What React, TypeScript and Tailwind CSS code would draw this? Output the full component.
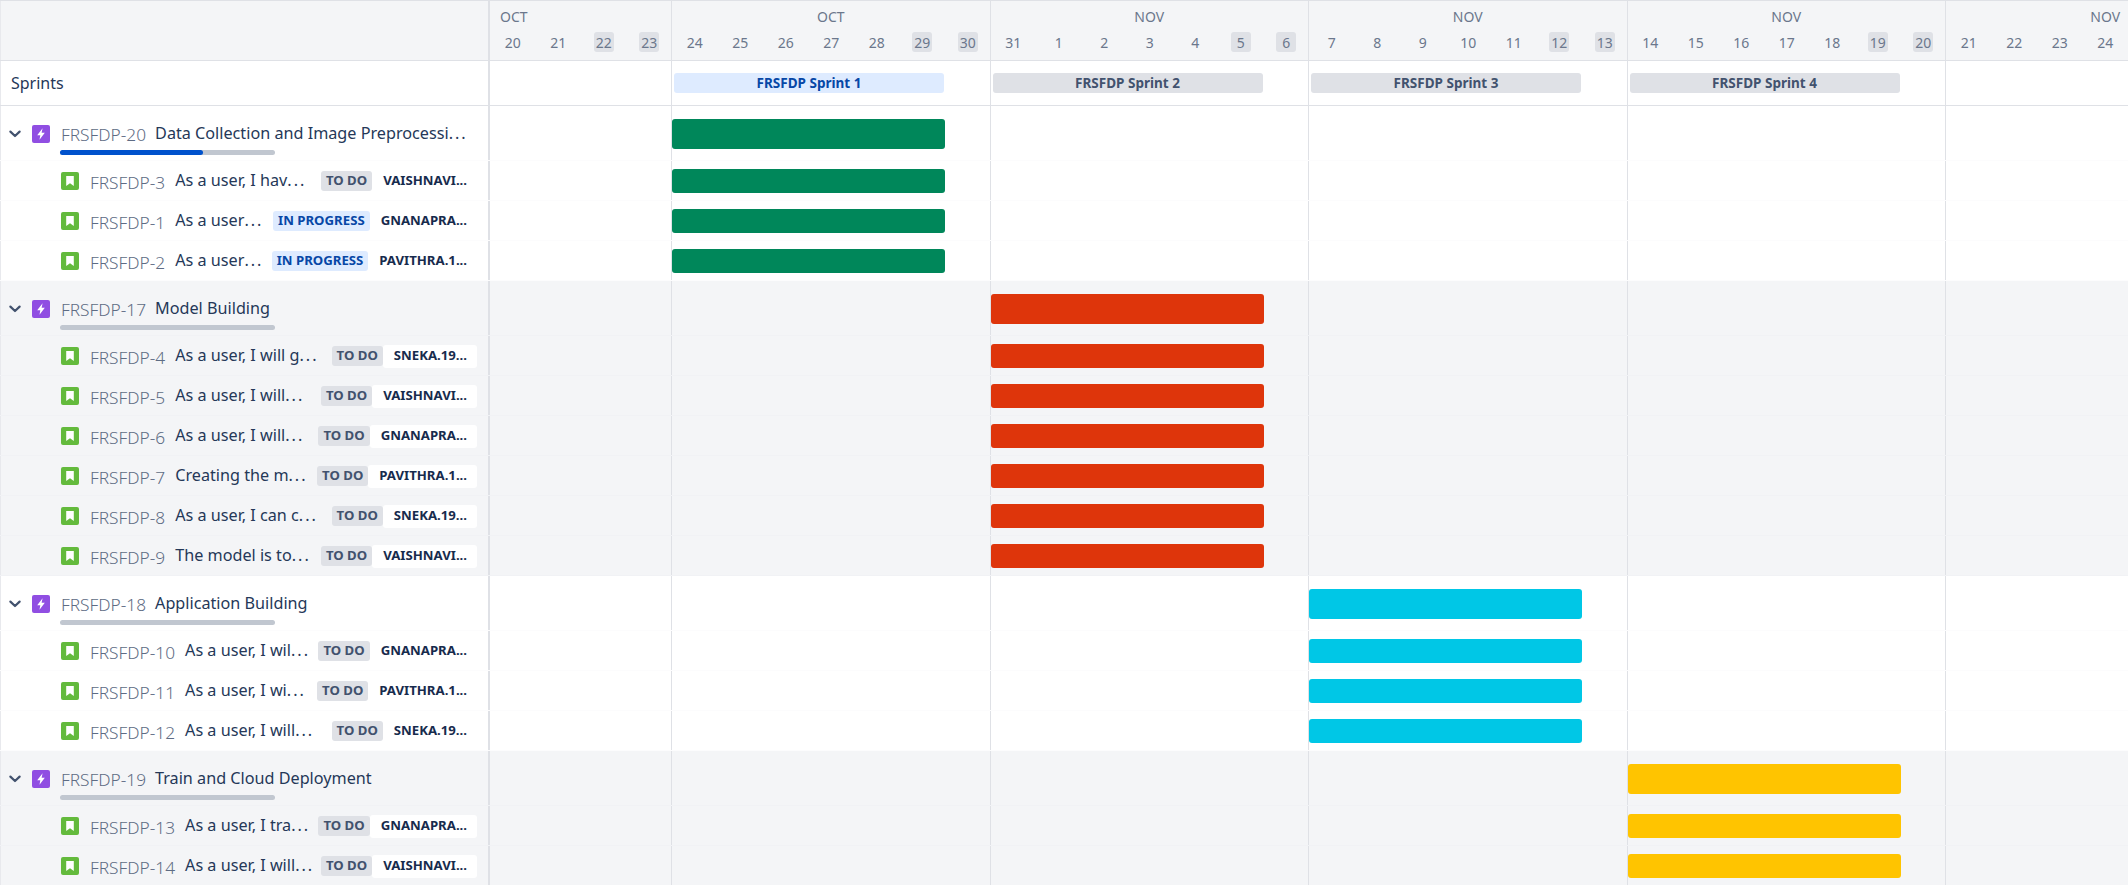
import React from "react";

type Status = "TO DO" | "IN PROGRESS";
type Story = { id: string; title: string; status: Status; who: string };
type Group = {
  id: string;
  title: string;
  week: number;
  grey: boolean;
  bar: string;
  progress?: boolean;
  stories: Story[];
};

const weekWidths = ["w-[182px]", "w-[318.5px]", "w-[318.5px]", "w-[318.5px]", "w-[318.5px]", "flex-1"];

const weeks = [
  { month: "OCT", first: true, days: [["20"], ["21"], ["22", "w"], ["23", "w"]] },
  { month: "OCT", days: [["24"], ["25"], ["26"], ["27"], ["28"], ["29", "w"], ["30", "w"]] },
  { month: "NOV", days: [["31"], ["1"], ["2"], ["3"], ["4"], ["5", "w"], ["6", "w"]] },
  { month: "NOV", days: [["7"], ["8"], ["9"], ["10"], ["11"], ["12", "w"], ["13", "w"]] },
  { month: "NOV", days: [["14"], ["15"], ["16"], ["17"], ["18"], ["19", "w"], ["20", "w"]] },
  { month: "NOV", last: true, days: [["21"], ["22"], ["23"], ["24"]] },
];

const groups: Group[] = [
  {
    id: "FRSFDP-20",
    title: "Data Collection and Image Preprocessi...",
    week: 1,
    grey: false,
    bar: "bg-[#00875a]",
    progress: true,
    stories: [
      { id: "FRSFDP-3", title: "As a user, I hav...", status: "TO DO", who: "VAISHNAVI..." },
      { id: "FRSFDP-1", title: "As a user...", status: "IN PROGRESS", who: "GNANAPRA..." },
      { id: "FRSFDP-2", title: "As a user...", status: "IN PROGRESS", who: "PAVITHRA.1..." },
    ],
  },
  {
    id: "FRSFDP-17",
    title: "Model Building",
    week: 2,
    grey: true,
    bar: "bg-[#de350b]",
    stories: [
      { id: "FRSFDP-4", title: "As a user, I will g...", status: "TO DO", who: "SNEKA.19..." },
      { id: "FRSFDP-5", title: "As a user, I will...", status: "TO DO", who: "VAISHNAVI..." },
      { id: "FRSFDP-6", title: "As a user, I will...", status: "TO DO", who: "GNANAPRA..." },
      { id: "FRSFDP-7", title: "Creating the m...", status: "TO DO", who: "PAVITHRA.1..." },
      { id: "FRSFDP-8", title: "As a user, I can c...", status: "TO DO", who: "SNEKA.19..." },
      { id: "FRSFDP-9", title: "The model is to...", status: "TO DO", who: "VAISHNAVI..." },
    ],
  },
  {
    id: "FRSFDP-18",
    title: "Application Building",
    week: 3,
    grey: false,
    bar: "bg-[#00c7e6]",
    stories: [
      { id: "FRSFDP-10", title: "As a user, I wil...", status: "TO DO", who: "GNANAPRA..." },
      { id: "FRSFDP-11", title: "As a user, I wi...", status: "TO DO", who: "PAVITHRA.1..." },
      { id: "FRSFDP-12", title: "As a user, I will...", status: "TO DO", who: "SNEKA.19..." },
    ],
  },
  {
    id: "FRSFDP-19",
    title: "Train and Cloud Deployment",
    week: 4,
    grey: true,
    bar: "bg-[#ffc400]",
    stories: [
      { id: "FRSFDP-13", title: "As a user, I tra...", status: "TO DO", who: "GNANAPRA..." },
      { id: "FRSFDP-14", title: "As a user, I will...", status: "TO DO", who: "VAISHNAVI..." },
    ],
  },
];

function EpicIcon() {
  return (
    <svg width="18" height="18" viewBox="0 0 18 18" className="shrink-0">
      <rect width="18" height="18" rx="2" fill="#904ee2" />
      <path d="M10.6 3.2 5.2 10.2h3.1l-.8 4.6 5.3-7H9.6z" fill="#fff" />
    </svg>
  );
}

function StoryIcon() {
  return (
    <svg width="18" height="18" viewBox="0 0 18 18" className="shrink-0">
      <rect width="18" height="18" rx="2" fill="#63ba3c" />
      <path d="M5.2 4h7.6v10L9 11.2 5.2 14z" fill="#fff" />
    </svg>
  );
}

function Chevron() {
  return (
    <svg width="12" height="8" viewBox="0 0 12 8" className="shrink-0">
      <path d="M1.4 1.6 6 6l4.6-4.4" fill="none" stroke="#42526e" strokeWidth="2.2" strokeLinecap="round" strokeLinejoin="round" />
    </svg>
  );
}

function Title({ text }: { text: string }) {
  const cut = text.endsWith("...");
  return (
    <>
      {cut ? text.slice(0, -3) : text}
      {cut && <span className="tracking-[2px]">...</span>}
    </>
  );
}

function ChartRow({ group, kind, height }: { group: Group; kind: "epic" | "story"; height: string }) {
  return (
    <div className={`flex flex-1 ${height}`}>
      {weekWidths.map((w, i) => (
        <div key={i} className={`${w} shrink-0 border-r border-[#dfe1e6] last:border-r-0`}>
          {i === group.week && (
            <div
              className={`${group.bar} w-[273px] rounded-[3px] ${kind === "epic" ? "mt-[13px] h-[30px]" : "mt-[8px] h-[24px]"}`}
            />
          )}
        </div>
      ))}
    </div>
  );
}

function LeftPanel({ children, className = "" }: { children: React.ReactNode; className?: string }) {
  return (
    <div className={`w-[490px] shrink-0 border-l border-r-2 border-l-[#e8e9ed] border-r-[#dfe1e6] ${className}`}>
      {children}
    </div>
  );
}

function StoryRow({ story, group }: { story: Story; group: Group }) {
  const prog = story.status === "IN PROGRESS";
  return (
    <div className="flex h-[40px] border-b border-[rgba(9,30,66,0.01)]">
      <LeftPanel className="flex items-center pl-[60px] pr-[11px]">
        <StoryIcon />
        <span className="ml-[11px] mt-[4px] text-[17.3px] font-light text-[#5e6c84]">{story.id}</span>
        <span className="ml-[10px] -mt-[1px] text-[16.2px] text-[#253858]">
          <Title text={story.title} />
        </span>
        <div className="ml-auto mt-[1px] flex items-center">
          <span
            className={`flex h-[20px] items-center rounded-[3px] px-[5px] text-[13.2px] font-bold ${prog ? "bg-[#deebff] text-[#0747a6]" : "bg-[#dfe1e6] text-[#42526e]"}`}
          >
            {story.status}
          </span>
          <span
            className={`flex h-[23px] items-center rounded-[3px] pl-[11px] pr-[10px] text-[13.2px] font-bold text-[#172b4d] ${group.grey ? "bg-white" : ""}`}
          >
            {story.who}
          </span>
        </div>
      </LeftPanel>
      <ChartRow group={group} kind="story" height="h-[39px]" />
    </div>
  );
}

function GroupBlock({ group }: { group: Group }) {
  return (
    <div className={group.grey ? "bg-[#f4f5f7]" : "bg-white"}>
      <div className="flex h-[55px] border-b border-[rgba(9,30,66,0.01)]">
        <LeftPanel className="flex flex-col pl-[8px] pt-[19px]">
          <div className="flex h-[18px] items-center">
            <Chevron />
            <span className="ml-[11px]">
              <EpicIcon />
            </span>
            <span className="ml-[11px] mt-[2px] text-[17.3px] font-light text-[#5e6c84]">{group.id}</span>
            <span className="ml-[9px] -mt-[2px] text-[16.2px] text-[#253858]">
              <Title text={group.title} />
            </span>
          </div>
          <div className="ml-[51px] mt-[7px] h-[5px] w-[215px] rounded-full bg-[#c1c7d0]">
            {group.progress && <div className="h-full w-[143px] rounded-full bg-[#0052cc]" />}
          </div>
        </LeftPanel>
        <ChartRow group={group} kind="epic" height="h-[54px]" />
      </div>
      {group.stories.map((s) => (
        <StoryRow key={s.id} story={s} group={group} />
      ))}
    </div>
  );
}

const sprints = [
  { week: 1, name: "FRSFDP Sprint 1", active: true },
  { week: 2, name: "FRSFDP Sprint 2" },
  { week: 3, name: "FRSFDP Sprint 3" },
  { week: 4, name: "FRSFDP Sprint 4" },
];

export default function App() {
  return (
    <div
      className="h-[885px] w-[2128px] overflow-hidden bg-white text-[#172b4d]"
      style={{ fontFamily: '"Noto Sans", "Open Sans", sans-serif' }}
    >
      <div className="flex h-[61px] border-y border-[#dfe1e6] bg-[#f4f5f7]">
        <LeftPanel>
          <div />
        </LeftPanel>
        <div className="flex flex-1">
          {weeks.map((wk, i) => (
            <div key={i} className={`${weekWidths[i]} shrink-0 border-r border-[#dfe1e6] last:border-r-0`}>
              <div
                className={`flex h-[31px] items-center text-[14px] text-[#6b778c] ${wk.first ? "pl-[10px]" : wk.last ? "pl-[136.5px]" : "justify-center"}`}
              >
                <span className={wk.last ? "w-[45.5px] text-center" : ""}>{wk.month}</span>
              </div>
              <div className="flex h-[28px]">
                {wk.days.map(([d, w]) => (
                  <div key={d} className="flex w-[45.5px] shrink-0 justify-center">
                    <span
                      className={`flex h-[20px] w-[20px] items-center justify-center rounded-[3px] text-[14px] text-[#6b778c] ${w ? "bg-[#dfe1e6]" : ""}`}
                    >
                      {d}
                    </span>
                  </div>
                ))}
              </div>
            </div>
          ))}
        </div>
      </div>

      <div className="flex h-[45px] border-b border-[#dfe1e6]">
        <LeftPanel className="flex items-center pl-[10px] text-[16px] text-[#253858]">Sprints</LeftPanel>
        <div className="flex flex-1">
          {weekWidths.map((w, i) => {
            const sp = sprints.find((s) => s.week === i);
            return (
              <div key={i} className={`${w} shrink-0 border-r border-[#dfe1e6] pl-[2px] pt-[12px] last:border-r-0`}>
                {sp && (
                  <div
                    className={`flex h-[20px] w-[270px] items-center justify-center rounded-[3px] text-[13.5px] font-bold ${sp.active ? "bg-[#deebff] text-[#0747a6]" : "bg-[#dfe1e6] text-[#42526e]"}`}
                  >
                    {sp.name}
                  </div>
                )}
              </div>
            );
          })}
        </div>
      </div>

      {groups.map((g) => (
        <GroupBlock key={g.id} group={g} />
      ))}
    </div>
  );
}
